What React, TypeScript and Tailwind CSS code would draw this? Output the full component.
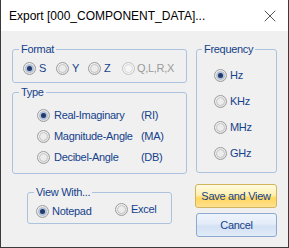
import { X } from "lucide-react";

type RadioProps = { checked?: boolean; disabled?: boolean };

const Radio = ({ checked, disabled }: RadioProps) => (
  <span
    className={
      disabled
        ? "flex h-[13px] w-[13px] shrink-0 items-center justify-center rounded-full border border-[#c4c4c4] bg-[#f4f4f4]"
        : "flex h-[13px] w-[13px] shrink-0 items-center justify-center rounded-full border border-[#9c9c9c] bg-[radial-gradient(circle_at_40%_35%,#ffffff,#d8d8d8)]"
    }
  >
    <span
      className={
        disabled
          ? "flex h-[9px] w-[9px] items-center justify-center rounded-full border border-[#dadada] bg-[#f6f6f6]"
          : "flex h-[9px] w-[9px] items-center justify-center rounded-full border border-[#c4c4c4] bg-[#ececec]"
      }
    >
      {checked && (
        <span className="h-[5px] w-[5px] rounded-full bg-[#25396a] shadow-[0_0_2px_1px_#8fb0dc]" />
      )}
    </span>
  </span>
);

const Legend = ({ children }: { children: string }) => (
  <legend className="px-[2px] leading-[13px]">{children}</legend>
);

const App = () => {
  return (
    <div className="flex h-[248px] w-[289px] flex-col border-x border-b border-[#3b3b3b] bg-[#f0f0f0] font-['Liberation_Sans',Arial,sans-serif] text-[11px] tracking-[-0.3px] text-[#15428b]">
      <div className="flex h-[31px] shrink-0 items-center justify-between bg-white pl-[8px] pr-[8px]">
        <span className="text-[12px] tracking-normal text-black">
          Export [000_COMPONENT_DATA]...
        </span>
        <X className="h-[20px] w-[20px] text-[#1a1a1a]" strokeWidth={0.9} />
      </div>

      <div className="flex pl-[11px]">
        <div className="flex w-[175px] flex-col">
          <fieldset className="mt-[12px] h-[40px] rounded-[3px] border border-[#adc2df] pl-[6px]">
            <Legend>Format</Legend>
            <div className="mt-[6px] ml-[4px] flex h-[13px] items-center">
              <div className="flex w-[33px] items-center gap-[3px]">
                <Radio checked />
                <span>S</span>
              </div>
              <div className="flex w-[32px] items-center gap-[3px]">
                <Radio />
                <span>Y</span>
              </div>
              <div className="flex w-[34px] items-center gap-[3px]">
                <Radio />
                <span>Z</span>
              </div>
              <div className="flex items-center gap-[2px] text-[#9a9a9a]">
                <Radio disabled />
                <span>Q,L,R,X</span>
              </div>
            </div>
          </fieldset>

          <fieldset className="mt-[3px] h-[88px] rounded-[3px] border border-[#adc2df] pl-[6px]">
            <Legend>Type</Legend>
            <div className="mt-[6px] ml-[18px] flex flex-col">
              {[
                ["Real-Imaginary", "(RI)", true],
                ["Magnitude-Angle", "(MA)", false],
                ["Decibel-Angle", "(DB)", false],
              ].map(([name, abbr, on]) => (
                <div key={name as string} className="flex h-[21px] items-center gap-[4px]">
                  <Radio checked={on as boolean} />
                  <span className="w-[83px] whitespace-nowrap">{name}</span>
                  <span>{abbr}</span>
                </div>
              ))}
            </div>
          </fieldset>

          <fieldset className="mt-[12px] ml-[15px] h-[38px] w-[145px] rounded-[3px] border border-[#adc2df] pl-[6px]">
            <Legend>View With...</Legend>
            <div className="mt-[2px] ml-[2px] flex items-start">
              <div className="mt-[2px] flex w-[79px] items-center gap-[3px]">
                <Radio checked />
                <span>Notepad</span>
              </div>
              <div className="flex items-center gap-[3px]">
                <Radio />
                <span>Excel</span>
              </div>
            </div>
          </fieldset>
        </div>

        <div className="ml-[9px] flex w-[81px] flex-col">
          <fieldset className="mt-[12px] h-[130px] rounded-[3px] border border-[#adc2df] pl-[5px]">
            <Legend>Frequency</Legend>
            <div className="mt-[6px] ml-[12px] flex flex-col">
              {["Hz", "KHz", "MHz", "GHz"].map((f, i) => (
                <div key={f} className="flex h-[26px] items-center gap-[3px]">
                  <Radio checked={i === 0} />
                  <span>{f}</span>
                </div>
              ))}
            </div>
          </fieldset>

          <button className="mt-[11px] -ml-[1px] h-[24px] w-[82px] rounded-[3px] border border-[#d2b45e] bg-[linear-gradient(to_bottom,#fffbe0_0%,#fff0b0_45%,#ffd65e_60%,#ffe291_100%)] text-[#15428b]">
            Save and View
          </button>
          <button className="mt-[5px] h-[24px] w-[81px] rounded-[3px] border border-[#8ea9d0] bg-[linear-gradient(to_bottom,#eef4fc_0%,#e3ecf8_45%,#d3e1f4_55%,#e1ebf8_100%)] text-[#15428b]">
            Cancel
          </button>
        </div>
      </div>
    </div>
  );
};

export default App;
